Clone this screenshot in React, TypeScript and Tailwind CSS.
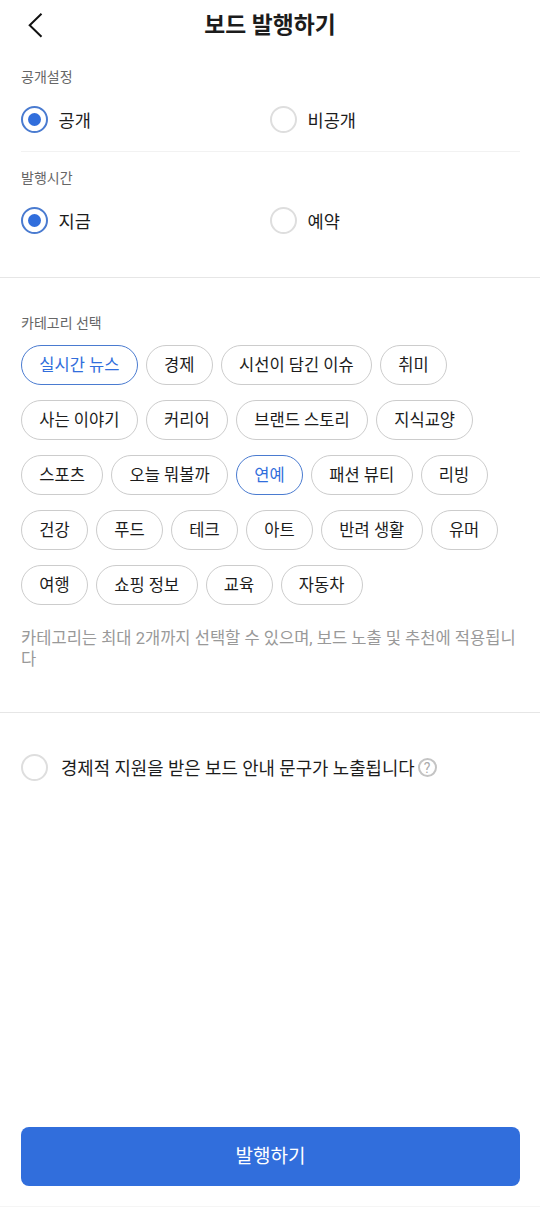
import { useState } from 'react';

const categories = [
  '실시간 뉴스', '경제', '시선이 담긴 이슈', '취미',
  '사는 이야기', '커리어', '브랜드 스토리', '지식교양',
  '스포츠', '오늘 뭐볼까', '연예', '패션 뷰티', '리빙',
  '건강', '푸드', '테크', '아트', '반려 생활', '유머',
  '여행', '쇼핑 정보', '교육', '자동차',
];

const MAX_CATEGORIES = 2;

const RadioMark = ({ checked }: { checked: boolean }) => (
  <span
    className={`flex size-[27px] shrink-0 items-center justify-center rounded-full border-2 ${
      checked ? 'border-[#4a7bd0]' : 'border-[#dedede]'
    }`}
  >
    {checked && <span className="size-[13px] rounded-full bg-[#316edc]" />}
  </span>
);

type RadioGroupProps = {
  label: string;
  options: string[];
  value: string;
  onChange: (value: string) => void;
};

const RadioGroup = ({ label, options, value, onChange }: RadioGroupProps) => (
  <div>
    <p className="text-[14px] leading-5 text-[#666666]">{label}</p>
    <div role="radiogroup" className="mt-[19px] grid grid-cols-[249px_1fr]">
      {options.map((option) => (
        <button
          key={option}
          role="radio"
          aria-checked={value === option}
          onClick={() => onChange(option)}
          className="flex h-[27px] items-center gap-[10.5px] text-[17.6px] leading-[27px] text-[#1c1c1c]"
        >
          <RadioMark checked={value === option} />
          <span className="pt-[3px]">{option}</span>
        </button>
      ))}
    </div>
  </div>
);

const App = () => {
  const [visibility, setVisibility] = useState('공개');
  const [publishTime, setPublishTime] = useState('지금');
  const [selected, setSelected] = useState<string[]>(['실시간 뉴스', '연예']);
  const [sponsored, setSponsored] = useState(false);

  const toggleCategory = (name: string) => {
    if (selected.includes(name)) {
      setSelected(selected.filter((item) => item !== name));
    } else if (selected.length < MAX_CATEGORIES) {
      setSelected([...selected, name]);
    }
  };

  return (
    <div className="flex h-[1207px] w-[540px] flex-col bg-white font-[Roboto,'Noto_Sans_CJK_KR',sans-serif] text-[#1c1c1c]">
      <header className="grid h-[49px] shrink-0 grid-cols-[60px_1fr_60px] items-center">
        <button aria-label="뒤로" className="pl-[27px]">
          <svg width="18" height="26" viewBox="0 0 18 26" fill="none" stroke="#111111" strokeWidth="2">
            <path d="M14.5 1.7 2.7 13.2 14.5 24.7" />
          </svg>
        </button>
        <h1 className="pt-0.5 text-center text-[22.8px] leading-[47px] font-bold">보드 발행하기</h1>
      </header>

      <section className="border-b border-[#e6e6e6] pt-[18px] pr-5 pb-[43px] pl-[21px]">
        <RadioGroup label="공개설정" options={['공개', '비공개']} value={visibility} onChange={setVisibility} />
        <hr className="mt-[18px] mb-4 border-[#f2f2f2]" />
        <RadioGroup label="발행시간" options={['지금', '예약']} value={publishTime} onChange={setPublishTime} />
      </section>

      {/* Category chips */}
      <section className="border-b border-[#e6e6e6] pt-[35px] pr-5 pb-[42px] pl-[21px]">
        <p className="text-[14px] leading-5 text-[#666666]">카테고리 선택</p>
        <div className="mt-3 flex flex-wrap gap-x-2 gap-y-[15px]">
          {categories.map((name) => (
            <button
              key={name}
              aria-pressed={selected.includes(name)}
              onClick={() => toggleCategory(name)}
              className={`flex h-10 items-center rounded-full border px-[17.3px] pt-[3px] text-[16.55px] ${
                selected.includes(name) ? 'border-[#4a7bd0] text-[#316edc]' : 'border-[#cccccc]'
              }`}
            >
              {name}
            </button>
          ))}
        </div>
        <p className="mt-[23px] text-[16.55px] leading-[21px] break-all text-[#999999]">
          카테고리는 최대 2개까지 선택할 수 있으며, 보드 노출 및 추천에 적용됩니다
        </p>
      </section>

      <section className="flex items-center px-[21px] pt-[41px]">
        <button
          role="checkbox"
          aria-checked={sponsored}
          onClick={() => setSponsored(!sponsored)}
          className="flex h-[27px] items-center gap-[13px] text-[17.8px] leading-[27px]"
        >
          <RadioMark checked={sponsored} />
          <span className="pt-0.5">경제적 지원을 받은 보드 안내 문구가 노출됩니다</span>
        </button>
        <span className="ml-[3px] flex size-[19px] items-center justify-center rounded-full border-2 border-[#c4c4c4] text-[14px] leading-none text-[#aaaaaa]">
          ?
        </span>
      </section>

      <footer className="mt-auto border-b border-[#f5f5f5] pr-5 pb-[20px] pl-[21px]">
        <button className="flex h-[59px] w-full items-center justify-center rounded-lg bg-[#316edc] pt-px text-[19px] text-white">
          발행하기
        </button>
      </footer>
    </div>
  );
};

export default App;
